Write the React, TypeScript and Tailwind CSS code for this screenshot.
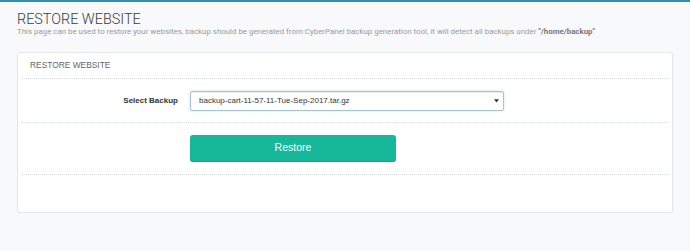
import React from 'react';

const App: React.FC = () => {
  return (
    <div className="min-h-[251px] w-[690px] bg-[#f7f9fb] border-t-2 border-[#2f8fae] font-['Liberation_Sans',Arial,sans-serif]">
      <div className="px-[17px] pt-[10px]">
        <h1 className="text-[14.4px] leading-[15px] text-[#3c3c3c] font-light font-['Roboto',sans-serif]">RESTORE WEBSITE</h1>
        <p className="text-[7.9px] leading-[10px] text-[#9a9a9a] font-['Roboto',sans-serif] whitespace-nowrap">
          This page can be used to restore your websites, backup should be generated from CyberPanel backup generation tool, it will detect all backups under{' '}
          <span className="font-bold text-[#777]">"/home/backup"</span>
        </p>

        <div className="mt-[15px] h-[161px] bg-white border border-[#e2e6ea] rounded-[3px] px-[3px]">
          <div className="h-[26px] flex items-center pl-[9px] border-b border-dotted border-[#d9dde1] text-[8.4px] text-[#666]">
            RESTORE WEBSITE
          </div>

          <div className="h-[44px] flex items-center border-b border-dotted border-[#d9dde1]">
            <label className="w-[157px] text-right text-[8px] font-bold text-[#333]">Select Backup</label>
            <div className="ml-[12px] w-[314px] h-[20px] flex items-center justify-between px-[8px] border border-[#a6c3d3] rounded-[2px] shadow-[inset_0_1px_1px_rgba(0,0,0,0.08),0_0_3px_rgba(102,175,233,0.35)] text-[8px] text-[#333]">
              <span>backup-cart-11-57-11-Tue-Sep-2017.tar.gz</span>
              <svg width="5" height="5" viewBox="0 0 6 6" className="mr-[-4px]">
                <path d="M0 1.5 L6 1.5 L3 5.5 Z" fill="#333" />
              </svg>
            </div>
          </div>

          <div className="h-[52px] flex items-center border-b border-dotted border-[#d9dde1]">
            <div className="ml-[169px] w-[206px] h-[27px] flex items-center justify-center bg-[#17b79a] border-b border-[#12a287] rounded-[3px] text-[10.5px] text-white">
              Restore
            </div>
          </div>
        </div>
      </div>
    </div>
  );
};

export default App;
